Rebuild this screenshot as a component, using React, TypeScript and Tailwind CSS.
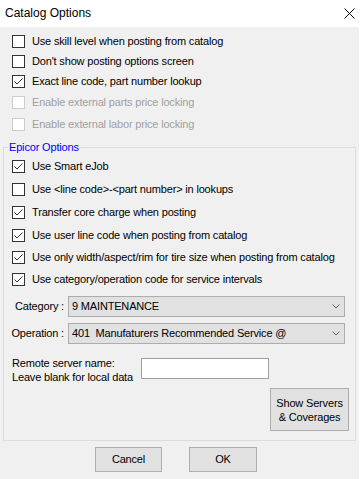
import React from "react";

type Opt = { label: string; checked?: boolean; disabled?: boolean; h: string };

const topOptions: Opt[] = [
  { label: "Use skill level when posting from catalog", h: "h-[20px]" },
  { label: "Don't show posting options screen", h: "h-[20px]" },
  { label: "Exact line code, part number lookup", checked: true, h: "h-[20px]" },
  { label: "Enable external parts price locking", disabled: true, h: "h-[21px] mt-[1px]" },
  { label: "Enable external labor price locking", disabled: true, h: "h-[21px] mt-[1px]" },
];

const epicorOptions: Opt[] = [
  { label: "Use Smart eJob", checked: true, h: "h-[23px]" },
  { label: "Use <line code>-<part number> in lookups", h: "h-[23px]" },
  { label: "Transfer core charge when posting", checked: true, h: "h-[23px]" },
  { label: "Use user line code when posting from catalog", checked: true, h: "h-[23px]" },
  { label: "Use only width/aspect/rim for tire size when posting from catalog", checked: true, h: "h-[20px]" },
  { label: "Use category/operation code for service intervals", checked: true, h: "h-[24px]" },
];

function CheckBox({ checked, disabled }: { checked?: boolean; disabled?: boolean }) {
  return (
    <span
      className={
        "w-[13px] h-[13px] shrink-0 bg-white border flex items-center justify-center " +
        (disabled ? "border-[#cccccc]" : "border-[#333333]")
      }
    >
      {checked && (
        <svg width="11" height="11" viewBox="0 0 11 11" fill="none">
          <path d="M1.5 5.5L4 8L9.5 2.5" stroke="#333333" strokeWidth="1" />
        </svg>
      )}
    </span>
  );
}

function Row({ opt }: { opt: Opt }) {
  return (
    <div className={"flex items-center gap-[7px] " + opt.h}>
      <CheckBox checked={opt.checked} disabled={opt.disabled} />
      <span className={opt.disabled ? "text-[#a0a0a0]" : "text-black"}>{opt.label}</span>
    </div>
  );
}

function Combo({ label, value }: { label: string; value: string }) {
  return (
    <div className="flex items-center">
      <span className="w-[60px] text-right">{label}</span>
      <div className="ml-[4px] w-[277px] h-[21px] bg-[#e1e1e1] border border-[#adadad] flex items-center justify-between pl-[3px] pr-[4px]">
        <span className="whitespace-pre">{value}</span>
        <svg width="8" height="5" viewBox="0 0 8 5" fill="none">
          <path d="M0.5 0.5L4 4L7.5 0.5" stroke="#606060" strokeWidth="1" />
        </svg>
      </div>
    </div>
  );
}

export default function App() {
  return (
    <div className="w-[361px] h-[479px] bg-[#f0f0f0] border-r-[2px] border-white font-['Liberation_Sans',Arial,sans-serif] text-[11px] leading-[13px] tracking-[-0.17px] text-black overflow-hidden">
      {/* TITLE BAR */}
      <div className="h-[27px] bg-white flex items-center justify-between pl-[5px] pr-[4px]">
        <span className="text-[12px] tracking-normal">Catalog Options</span>
        <svg width="11" height="11" viewBox="0 0 11 11" fill="none">
          <path d="M0.5 0.5L10.5 10.5M10.5 0.5L0.5 10.5" stroke="#000000" strokeWidth="1" />
        </svg>
      </div>

      {/* GENERAL OPTIONS */}
      <div className="pl-[12px] pt-[4px]">
        {topOptions.map((o) => (
          <Row key={o.label} opt={o} />
        ))}
      </div>

      {/* EPICOR GROUP */}
      <fieldset className="ml-[3px] mt-[5px] w-[353px] border border-[#dcdcdc] pb-[9px]">
        <legend className="ml-[4px] px-[1px] leading-[14px] text-[#0000ff]">Epicor Options</legend>
        <div className="pl-[8px] mt-[1px]">
          {epicorOptions.map((o) => (
            <Row key={o.label} opt={o} />
          ))}
        </div>

        <div className="mt-[5px] flex flex-col gap-[6px]">
          <Combo label="Category :" value="9 MAINTENANCE" />
          <Combo label="Operation :" value="401  Manufaturers Recommended Service @" />
        </div>

        <div className="mt-[12px] pl-[8px] flex items-start">
          <div className="w-[129px] shrink-0 leading-[14px]">
            <div>Remote server name:</div>
            <div>Leave blank for local data</div>
          </div>
          <input
            type="text"
            className="mt-[2px] w-[128px] h-[21px] bg-white border border-[#a0a0a0] outline-none"
          />
        </div>

        <div className="mt-[4px] flex justify-end pr-[6px]">
          <button className="w-[79px] h-[43px] bg-[#e1e1e1] border border-[#adadad] leading-[14px]">
            Show Servers
            <br />& Coverages
          </button>
        </div>
      </fieldset>

      {/* DIALOG BUTTONS */}
      <div className="mt-[6px] flex pl-[95px] gap-[27px]">
        <button className="w-[67px] h-[25px] bg-[#e1e1e1] border border-[#adadad]">Cancel</button>
        <button className="w-[68px] h-[25px] bg-[#e1e1e1] border border-[#adadad]">OK</button>
      </div>
    </div>
  );
}
